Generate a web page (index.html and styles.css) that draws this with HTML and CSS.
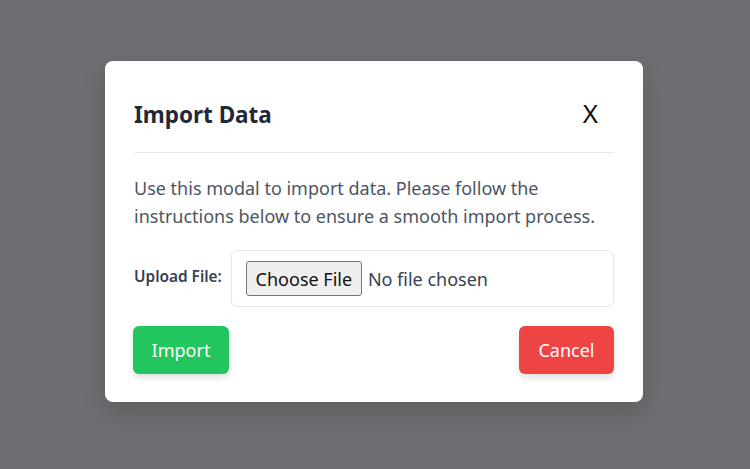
FILE: index.html
```html
<!DOCTYPE html>
<html lang="en">
<head>
<meta charset="utf-8">
<title>Import Data</title>
<link rel="stylesheet" href="styles.css">
</head>
<body>
<div class="backdrop">
  <div class="modal" role="dialog" aria-labelledby="modal-title">
    <div class="modal-header">
      <h2 id="modal-title" class="modal-title">Import Data</h2>
      <button class="close-btn" aria-label="Close">X</button>
    </div>
    <p class="modal-text">Use this modal to import data. Please follow the instructions below to ensure a smooth import process.</p>
    <div class="form-row">
      <label class="form-label">Upload File:</label>
      <div class="file-field">
        <span class="file-btn">Choose File</span>
        <span class="file-name">No file chosen</span>
      </div>
    </div>
    <div class="modal-footer">
      <button class="btn btn-import">Import</button>
      <button class="btn btn-cancel">Cancel</button>
    </div>
  </div>
</div>
</body>
</html>
```
FILE: styles.css
```css
* { box-sizing: border-box; }
html, body {
  margin: 0;
  padding: 0;
  height: 100%;
}
body {
  font-family: "Noto Sans", "Open Sans", sans-serif;
  background: #6c6e71;
}
.backdrop {
  height: 469px;
  padding: 61px 0 0 105px;
}
.modal {
  width: 538px;
  background: #ffffff;
  border-radius: 8px;
  padding: 28px 29px 28px 29px;
  box-shadow: 0 10px 25px rgba(0,0,0,0.15);
}
.modal-header {
  display: flex;
  align-items: center;
  justify-content: space-between;
  box-sizing: content-box;
  height: 52px;
  padding-bottom: 11px;
  border-bottom: 1px solid #e5e7eb;
}
.modal-title {
  margin: 0 0 1px 0;
  font-size: 22.5px;
  font-weight: 700;
  color: #1f2937;
  line-height: 32px;
}
.close-btn {
  background: none;
  border: none;
  padding: 0;
  margin: 0 16px 4px 0;
  font-family: "Noto Sans", sans-serif;
  font-size: 26px;
  line-height: 32px;
  color: #111111;
  cursor: pointer;
}
.modal-text {
  margin: 21px 0 0 0;
  font-size: 18px;
  line-height: 28px;
  color: #4b5563;
}
.form-row {
  display: flex;
  align-items: center;
  gap: 9px;
  margin-top: 20px;
}
.form-label {
  font-size: 15.4px;
  font-weight: 600;
  color: #374151;
  white-space: nowrap;
  margin-bottom: 4px;
}
.file-field {
  flex: 1;
  height: 57px;
  border: 1px solid #e5e7eb;
  border-radius: 6px;
  display: flex;
  align-items: center;
  padding: 0 14px;
}
.file-btn {
  display: inline-flex;
  align-items: center;
  justify-content: center;
  height: 35px;
  width: 116px;
  background: #efefef;
  border: 1px solid #767676;
  border-radius: 3px;
  font-size: 18px;
  color: #111111;
}
.file-name {
  margin-left: 6px;
  font-size: 18px;
  color: #374151;
}
.modal-footer {
  display: flex;
  justify-content: space-between;
  margin-top: 19px;
}
.btn {
  height: 48px;
  padding: 0;
  border: none;
  border-radius: 6px;
  font-family: "Noto Sans", sans-serif;
  font-size: 18px;
  color: #ffffff;
  box-shadow: 0 4px 6px rgba(0,0,0,0.12);
  cursor: pointer;
}
.btn-import { background: #22c55e; width: 96px; margin-left: -1px; }
.btn-cancel { background: #ef4444; width: 95px; }
```
